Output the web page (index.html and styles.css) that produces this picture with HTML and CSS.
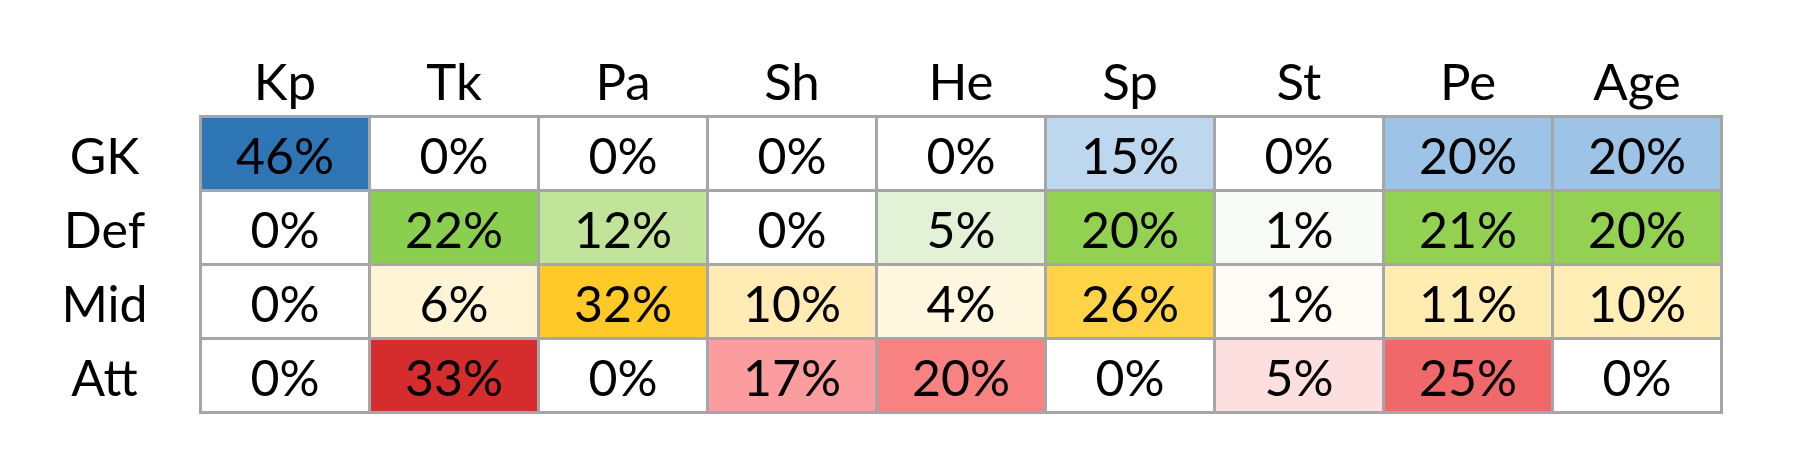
FILE: index.html
```html
<!DOCTYPE html>
<html>
<head>
<meta charset="utf-8">
<link rel="stylesheet" href="styles.css">
</head>
<body>
<div class="chart">
  <div class="corner"></div>
  <div class="heads">
    <div class="head">Kp</div>
    <div class="head">Tk</div>
    <div class="head">Pa</div>
    <div class="head">Sh</div>
    <div class="head">He</div>
    <div class="head">Sp</div>
    <div class="head">St</div>
    <div class="head">Pe</div>
    <div class="head">Age</div>
  </div>
  <div class="labels">
    <div class="label">GK</div>
    <div class="label">Def</div>
    <div class="label">Mid</div>
    <div class="label">Att</div>
  </div>
  <div class="table">
    <div class="cell b4">46%</div>
    <div class="cell">0%</div>
    <div class="cell">0%</div>
    <div class="cell">0%</div>
    <div class="cell">0%</div>
    <div class="cell b1">15%</div>
    <div class="cell">0%</div>
    <div class="cell b2">20%</div>
    <div class="cell b2">20%</div>

    <div class="cell">0%</div>
    <div class="cell g4">22%</div>
    <div class="cell g2">12%</div>
    <div class="cell">0%</div>
    <div class="cell g1">5%</div>
    <div class="cell g3">20%</div>
    <div class="cell g0">1%</div>
    <div class="cell g3">21%</div>
    <div class="cell g3">20%</div>

    <div class="cell">0%</div>
    <div class="cell y1">6%</div>
    <div class="cell y4">32%</div>
    <div class="cell y2">10%</div>
    <div class="cell y5">4%</div>
    <div class="cell y3">26%</div>
    <div class="cell y0">1%</div>
    <div class="cell y6">11%</div>
    <div class="cell y7">10%</div>

    <div class="cell">0%</div>
    <div class="cell r4">33%</div>
    <div class="cell">0%</div>
    <div class="cell r1">17%</div>
    <div class="cell r2">20%</div>
    <div class="cell">0%</div>
    <div class="cell r0">5%</div>
    <div class="cell r3">25%</div>
    <div class="cell">0%</div>
  </div>
</div>
</body>
</html>
```

FILE: styles.css
```css
html, body {
  margin: 0;
  padding: 0;
  background: #ffffff;
}

body {
  font-family: Lato, "Open Sans", sans-serif;
  color: #000000;
  width: 1800px;
  height: 474px;
  overflow: hidden;
}

.chart {
  display: grid;
  grid-template-columns: 199px auto;
  grid-template-rows: 115px auto;
  justify-content: start;
}

.heads {
  display: grid;
  grid-template-columns: repeat(9, 166px);
  column-gap: 3px;
  padding: 0 3px 10px 3px;
  align-items: end;
}

.head {
  font-size: 51px;
  line-height: 48px;
  text-align: center;
}

.labels {
  display: grid;
  grid-template-rows: repeat(4, 71px);
  row-gap: 3px;
  padding: 3px 0 3px 10px;
}

.label,
.cell {
  font-size: 50px;
  line-height: 68px;
  padding-top: 3px;
  text-align: center;
}

.table {
  display: grid;
  grid-template-columns: repeat(9, 166px);
  grid-template-rows: repeat(4, 71px);
  gap: 3px;
  padding: 3px;
  background: #a6a6a6;
}

.cell {
  background: #ffffff;
}

.b4 { background: #2e75b6; }
.b1 { background: #bdd7ee; }
.b2 { background: #9dc3e6; }

.g4 { background: #8bcf50; }
.g3 { background: #93d152; }
.g2 { background: #c1e49a; }
.g1 { background: #e3f2d7; }
.g0 { background: #f8fbf5; }

.y4 { background: #ffca28; }
.y3 { background: #ffd347; }
.y2 { background: #ffebb3; }
.y6 { background: #ffecb1; }
.y7 { background: #ffeeb5; }
.y1 { background: #fff4d6; }
.y5 { background: #fff7e0; }
.y0 { background: #fffcf5; }

.r4 { background: #d52d2d; }
.r3 { background: #f0686a; }
.r2 { background: #f88182; }
.r1 { background: #fb9d9e; }
.r0 { background: #fddfe0; }
```
